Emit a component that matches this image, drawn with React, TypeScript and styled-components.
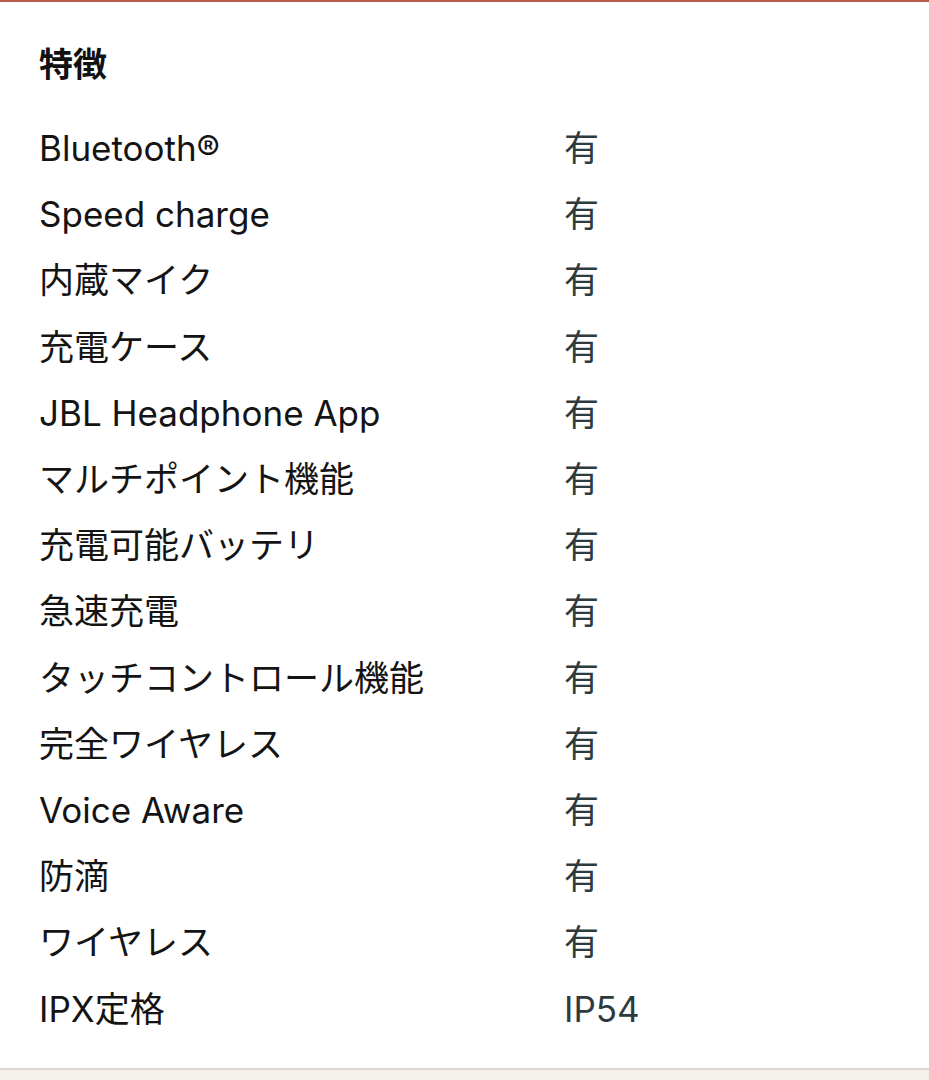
import React from "react";
import styled, { createGlobalStyle } from "styled-components";

const GlobalStyle = createGlobalStyle`
  html, body {
    margin: 0;
    padding: 0;
    background: #f4f1ec;
  }
  body {
    font-family: Inter, "Noto Sans CJK JP", sans-serif;
  }
`;

const Page = styled.div`
  width: 929px;
  background: #f4f1ec;
`;

const Panel = styled.section`
  background: #ffffff;
  border-top: 2px solid #b85a48;
  border-bottom: 2px solid #dcd7d1;
  padding: 43px 0 26px 39px;
`;

const Heading = styled.h2`
  margin: 0 0 30px 0;
  font-size: 34px;
  line-height: 40px;
  font-weight: 700;
  color: #111111;
`;

const Table = styled.dl`
  margin: 0;
  display: grid;
  grid-template-columns: 525px 1fr;
  grid-auto-rows: 66.2px;
  align-items: center;
`;

const Label = styled.dt`
  font-size: 35px;
  line-height: 40px;
  color: #141414;
  white-space: nowrap;
`;

const Value = styled.dd`
  margin: 0;
  font-size: 35px;
  line-height: 40px;
  color: #2e3b3e;
`;

const rows: [string, string][] = [
  ["Bluetooth®", "有"],
  ["Speed charge", "有"],
  ["内蔵マイク", "有"],
  ["充電ケース", "有"],
  ["JBL Headphone App", "有"],
  ["マルチポイント機能", "有"],
  ["充電可能バッテリ", "有"],
  ["急速充電", "有"],
  ["タッチコントロール機能", "有"],
  ["完全ワイヤレス", "有"],
  ["Voice Aware", "有"],
  ["防滴", "有"],
  ["ワイヤレス", "有"],
  ["IPX定格", "IP54"],
];

const App = () => {
  return (
    <Page>
      <GlobalStyle />
      <Panel>
        <Heading>特徴</Heading>
        <Table>
          {rows.map(([k, v]) => (
            <React.Fragment key={k}>
              <Label>{k}</Label>
              <Value>{v}</Value>
            </React.Fragment>
          ))}
        </Table>
      </Panel>
    </Page>
  );
};

export default App;
